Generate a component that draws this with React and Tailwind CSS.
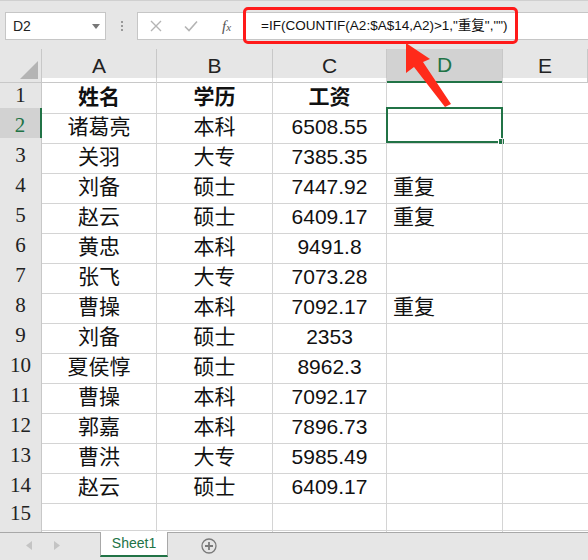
import React from "react";

const rows = [
  ["姓名", "学历", "工资", ""],
  ["诸葛亮", "本科", "6508.55", ""],
  ["关羽", "大专", "7385.35", ""],
  ["刘备", "硕士", "7447.92", "重复"],
  ["赵云", "硕士", "6409.17", "重复"],
  ["黄忠", "本科", "9491.8", ""],
  ["张飞", "大专", "7073.28", ""],
  ["曹操", "本科", "7092.17", "重复"],
  ["刘备", "硕士", "2353", ""],
  ["夏侯惇", "硕士", "8962.3", ""],
  ["曹操", "本科", "7092.17", ""],
  ["郭嘉", "本科", "7896.73", ""],
  ["曹洪", "大专", "5985.49", ""],
  ["赵云", "硕士", "6409.17", ""],
  ["", "", "", ""],
  ["", "", "", ""],
];

const cellFont = { fontFamily: '"Liberation Sans", "Noto Sans CJK SC", sans-serif' };

const cols = "grid-cols-[42px_115px_116px_114px_116px_1fr]";

export default function App() {
  return (
    <div className="relative w-[588px] h-[560px] overflow-hidden bg-white select-none" style={cellFont}>
      {/* formula bar */}
      <div className="h-[49px] bg-[#e6e6e6] border-t border-[#d0d0d0] flex items-start pt-[11px] pl-[5px]">
        <div className="w-[101px] h-[28px] bg-white border border-[#c6c6c6] flex items-center justify-between pl-[7px] pr-[5px]">
          <span className="text-[14px] text-[#222]">D2</span>
          <svg width="8" height="5" viewBox="0 0 8 5">
            <path d="M0 0h8L4 5z" fill="#777" />
          </svg>
        </div>
        <div className="w-[31px] h-[28px] flex flex-col items-center justify-center gap-[2px]">
          <span className="w-[2px] h-[2px] bg-[#999]" />
          <span className="w-[2px] h-[2px] bg-[#999]" />
          <span className="w-[2px] h-[2px] bg-[#999]" />
        </div>
        <div className="flex-1 h-[28px] bg-white border border-[#c6c6c6] border-r-0 flex items-center">
          <div className="w-[106px] flex items-center pl-[12px] gap-[22px]">
            <svg width="12" height="12" viewBox="0 0 12 12">
              <path d="M1 1l10 10M11 1L1 11" stroke="#b4b4b4" strokeWidth="1.4" />
            </svg>
            <svg width="14" height="12" viewBox="0 0 14 12">
              <path d="M1 6.5l4 4L13 1.5" stroke="#b4b4b4" strokeWidth="1.6" fill="none" />
            </svg>
            <span className="text-[15px] italic text-[#555] ml-[2px]" style={{ fontFamily: '"Liberation Serif", serif' }}>
              f<span className="text-[11px]">x</span>
            </span>
          </div>
          <div className="pl-[17px] text-[13.5px] text-[#111] whitespace-nowrap">=IF(COUNTIF(A2:$A$14,A2)&gt;1,"重复","")</div>
        </div>
      </div>

      {/* grid */}
      <div className="h-[483px] overflow-hidden">
        <div className={`grid ${cols} h-[29px] bg-[#e6e6e6]`}>
          <div className="relative border-r border-b border-[#c8c8c8]">
            <svg className="absolute right-[3px] bottom-[3px]" width="18" height="18" viewBox="0 0 18 18">
              <path d="M18 0V18H0z" fill="#b4b4b4" />
            </svg>
          </div>
          {["A", "B", "C", "D", "E"].map((c) => (
            <div
              key={c}
              className={
                c === "D"
                  ? "flex items-center justify-center text-[21px] text-[#217346] bg-[#d2d2d2] border-r border-[#c8c8c8] border-b-2 border-b-[#217346]"
                  : "flex items-center justify-center text-[21px] text-[#222] border-r border-b border-[#c8c8c8]"
              }
            >
              {c}
            </div>
          ))}
        </div>
        {rows.map((r, i) => {
          const n = i + 1;
          const sel = n === 2;
          return (
            <div key={n} className={`grid ${cols} h-[30px]`}>
              <div
                className={
                  sel
                    ? "flex items-center justify-center text-[21px] text-[#217346] bg-[#d2d2d2] border-b border-[#c8c8c8] border-r-2 border-r-[#217346]"
                    : "flex items-center justify-center text-[21px] text-[#222] bg-[#e6e6e6] border-r border-b border-[#c8c8c8]"
                }
                style={{ fontFamily: '"Liberation Serif", serif' }}
              >
                {n}
              </div>
              {r.slice(0, 3).map((v, j) => (
                <div
                  key={j}
                  className={`flex items-center justify-center pt-[3px] text-[21px] text-[#111] border-r border-b border-[#d4d4d4] ${n === 1 ? "font-bold" : ""}`}
                >
                  {v}
                </div>
              ))}
              <div className="relative flex items-center pl-[6px] pt-[3px] text-[21px] text-[#111] border-r border-b border-[#d4d4d4]">
                {r[3]}
                {sel && (
                  <div className="absolute -left-[1px] -top-[1px] -right-[1px] bottom-0 border-2 border-[#217346]">
                    <div className="absolute -right-[4px] -bottom-[4px] w-[7px] h-[7px] bg-[#217346] border border-white" />
                  </div>
                )}
              </div>
              <div className="border-b border-[#d4d4d4]" />
            </div>
          );
        })}
      </div>

      {/* sheet tabs */}
      <div className="h-[28px] bg-[#e6e6e6] border-t border-[#a8a8a8] flex items-start">
        <div className="w-[100px] h-[24px] flex items-center pl-[26px] gap-[22px]">
          <svg width="6" height="9" viewBox="0 0 6 9">
            <path d="M6 0v9L0 4.5z" fill="#c4c4c4" />
          </svg>
          <svg width="6" height="9" viewBox="0 0 6 9">
            <path d="M0 0v9l6-4.5z" fill="#c4c4c4" />
          </svg>
        </div>
        <div className="-mt-[1px] w-[68px] h-[25px] bg-white border-x border-[#a8a8a8] border-b-2 border-b-[#217346] flex items-center justify-center text-[14px] text-[#217346]">
          Sheet1
        </div>
        <div className="ml-[33px] mt-[5px]">
          <svg width="16" height="16" viewBox="0 0 16 16">
            <circle cx="8" cy="8" r="7" fill="none" stroke="#7a7a7a" strokeWidth="1.3" />
            <path d="M8 4v8M4 8h8" stroke="#7a7a7a" strokeWidth="1.8" />
          </svg>
        </div>
      </div>

      {/* annotation overlay */}
      <div className="absolute left-[243px] top-[7px] w-[275px] h-[37px] border-[3px] border-[#ff1a1a] rounded-[5px] pointer-events-none" />
      <svg className="absolute left-0 top-0 pointer-events-none" width="588" height="560">
        <polygon points="406,43 430,59 423,62 451,104 445,107 414,67 406,73" fill="#ff2a1a" />
      </svg>
    </div>
  );
}
